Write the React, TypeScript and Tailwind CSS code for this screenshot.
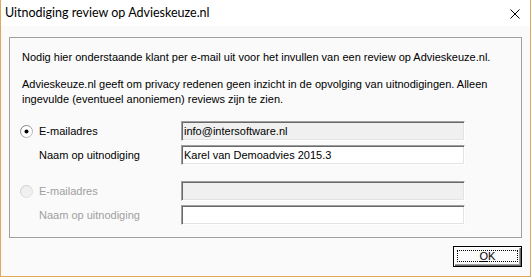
import React from "react";

const Radio = ({ checked, disabled }: { checked?: boolean; disabled?: boolean }) => (
  <svg width="13" height="13" viewBox="0 0 13 13" className="shrink-0">
    <defs>
      <linearGradient id={disabled ? "rgd" : "rg"} x1="0" y1="0" x2="1" y2="1">
        <stop offset="0" stopColor={disabled ? "#c8c8c8" : "#6f6f6f"} />
        <stop offset="1" stopColor={disabled ? "#e6e6e6" : "#c9c9c9"} />
      </linearGradient>
    </defs>
    <circle cx="6.5" cy="6.5" r="6" fill={disabled ? "#f0f0f0" : "#ffffff"} stroke={`url(#${disabled ? "rgd" : "rg"})`} strokeWidth="1" />
    {checked && <circle cx="6.5" cy="6.5" r="2" fill="#000" />}
  </svg>
);

const Field = ({ value, readOnly }: { value?: string; readOnly?: boolean }) => (
  <div
    className={`w-[284px] h-[20px] border border-t-[#a0a0a0] border-l-[#a0a0a0] border-b-white border-r-white shadow-[inset_1px_1px_0_#696969,inset_-1px_-1px_0_#e3e3e3] flex items-center pl-[2px] pt-[1px] ${
      readOnly ? "bg-[#f0f0f0]" : "bg-white"
    }`}
  >
    <span className="text-[11px] leading-[13px] text-black whitespace-nowrap">{value}</span>
  </div>
);

export default function App() {
  return (
    <div
      className="w-[531px] h-[277px] bg-[#fafafa] border-l border-r border-b border-[#e3a857] flex flex-col"
      style={{ fontFamily: '"Liberation Sans", Arial, sans-serif' }}
    >
      <div className="h-[26px] bg-white flex items-center justify-between pl-[4px] pr-[10px] shrink-0">
        <span
          className="text-[12.5px] text-black leading-none pt-[1px]"
          style={{ fontFamily: 'Lato, "Noto Sans", sans-serif' }}
        >
          Uitnodiging review op Advieskeuze.nl
        </span>
        <svg width="10" height="10" viewBox="0 0 10 10" className="mt-[2px]">
          <path d="M0.5 0.5 L9.5 9.5 M9.5 0.5 L0.5 9.5" stroke="#000" strokeWidth="1" />
        </svg>
      </div>

      <div className="flex-1 flex flex-col px-[8px]">
        <div className="mt-[11px] h-[201px] border border-[#a0a0a0] flex flex-col pl-[12px] pt-[12px] text-[11px] text-black">
          <p className="leading-[15px] whitespace-nowrap">
            Nodig hier onderstaande klant per e-mail uit voor het invullen van een review op Advieskeuze.nl.
          </p>
          <p className="leading-[15px] mt-[12px]">
            Advieskeuze.nl geeft om privacy redenen geen inzicht in de opvolging van uitnodigingen. Alleen
            <br />
            ingevulde (eventueel anoniemen) reviews zijn te zien.
          </p>

          <div className="mt-[14px] flex flex-col -ml-[12px]">
            <div className="flex items-center h-[20px]">
              <div className="w-[171px] flex items-center pl-[10px]">
                <Radio checked />
                <span className="ml-[6px]">E-mailadres</span>
              </div>
              <Field value="info@intersoftware.nl" readOnly />
            </div>
            <div className="flex items-center h-[20px] mt-[4px]">
              <div className="w-[171px] pl-[29px]">Naam op uitnodiging</div>
              <Field value="Karel van Demoadvies 2015.3" />
            </div>
            <div className="flex items-center h-[20px] mt-[16px]">
              <div className="w-[171px] flex items-center pl-[10px] text-[#a0a0a0]">
                <Radio disabled />
                <span className="ml-[6px]">E-mailadres</span>
              </div>
              <Field readOnly />
            </div>
            <div className="flex items-center h-[20px] mt-[4px]">
              <div className="w-[171px] pl-[29px] text-[#a0a0a0]">Naam op uitnodiging</div>
              <Field />
            </div>
          </div>
        </div>

        <div className="flex justify-end mt-[8px]">
          <div className="w-[69px] h-[21px] border border-black bg-[#fafafa]">
            <div className="w-full h-full shadow-[inset_1px_1px_0_#ffffff,inset_-1px_-1px_0_#696969,inset_-2px_-2px_0_#a0a0a0] p-[3px] pb-[4px]">
              <div className="w-full h-full border border-dotted border-black flex items-center justify-center text-[11px] leading-none text-black">
                <span>
                  <span className="underline">O</span>K
                </span>
              </div>
            </div>
          </div>
        </div>
      </div>
    </div>
  );
}
